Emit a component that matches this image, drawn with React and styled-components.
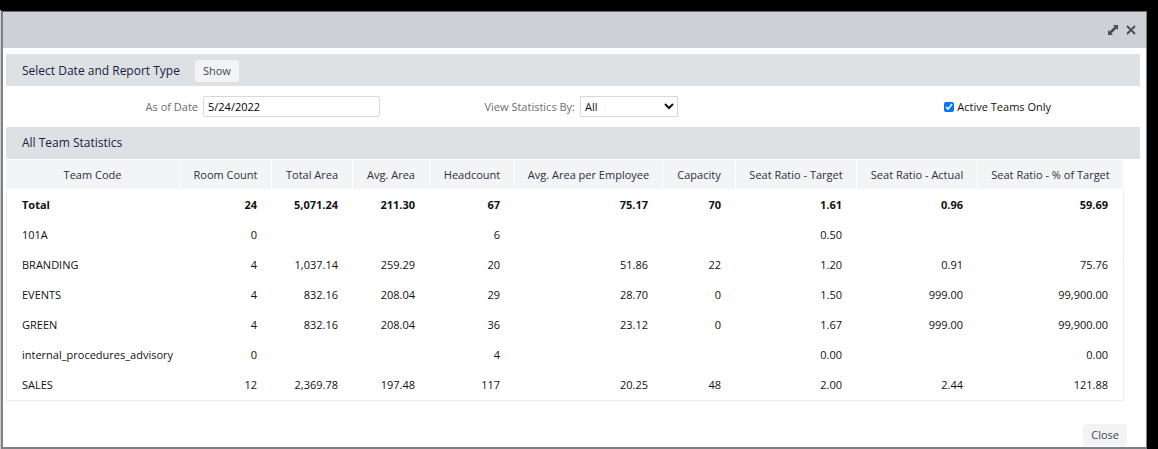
import React from "react";
import styled, { createGlobalStyle } from "styled-components";

const GlobalStyle = createGlobalStyle`
  *, *::before, *::after { box-sizing: border-box; }
  html, body, #root { height: 100%; }
  body {
    margin: 0;
    background: #000;
    font-family: "Open Sans", "Noto Sans", sans-serif;
    font-size: 11px;
    line-height: 16px;
    color: #111;
  }
  button, input, select { font: inherit; }
`;

const Backdrop = styled.div`
  min-height: 100%;
  display: flex;
  padding: 11px 11px 0 0;
  border-left: 1px solid #c9cdd1;
  border-image: linear-gradient(#000 11px, #c9cdd1 11px) 1;
`;

const Dialog = styled.section`
  flex: 1;
  min-width: 0;
  display: flex;
  flex-direction: column;
  background: #fff;
  border: 2px solid #7d8082;
  border-right-width: 1px;
  border-top: 1px solid #6b6e70;
`;

const TitleBar = styled.header`
  height: 36px;
  flex: none;
  display: flex;
  align-items: center;
  justify-content: flex-end;
  gap: 6px;
  padding-right: 9px;
  background: #cdd1d5;
`;

const IconButton = styled.button`
  display: flex;
  width: 12px;
  height: 12px;
  padding: 0;
  border: 0;
  background: none;
  color: #464c5b;
`;

const Body = styled.main`
  flex: 1;
  display: flex;
  flex-direction: column;
  padding: 6px 6px 0 3px;
`;

const SectionBar = styled.div`
  display: flex;
  align-items: center;
  gap: 15px;
  height: 32px;
  flex: none;
  padding: 0 16px;
  background: #dee1e4;
`;

const ControlBar = styled(SectionBar)`
  padding-top: 2px;
`;

const SectionTitle = styled.h2`
  margin: 0;
  font-size: 12px;
  font-weight: 500;
  color: #14213f;
`;

const Button = styled.button`
  height: 22px;
  padding: 0 8px;
  border: 0;
  border-radius: 3px;
  background: #f1f3f5;
  color: #3f4756;
`;

const Filters = styled.form`
  display: grid;
  grid-template-columns: 374fr 298fr 462fr;
  align-items: center;
  height: 41px;
  flex: none;
`;

const Field = styled.div`
  display: flex;
  align-items: center;
  justify-content: flex-end;
  gap: 5px;
`;

const CheckField = styled(Field)`
  gap: 3px;
  padding-right: 89px;
`;

const Label = styled.label`
  color: #6a6e74;
`;

const CheckLabel = styled.label`
  color: #111;
`;

const TextInput = styled.input`
  width: 177px;
  height: 21px;
  padding: 0 4px;
  border: 1px solid #d5d9dc;
  border-radius: 2px;
  color: #000;
  background: #fff;
`;

const Select = styled.select`
  width: 98px;
  height: 21px;
  padding: 0;
  border: 1px solid #d5d9dc;
  border-radius: 0;
  color: #111;
  background: #fff;
`;

const Checkbox = styled.input`
  width: 10px;
  height: 10px;
  margin: 0;
  accent-color: #0075ff;
`;

const TableWrap = styled.div`
  padding: 0 16px 0 0;
`;

const Table = styled.table`
  width: 100%;
  table-layout: fixed;
  border-collapse: separate;
  border-spacing: 0;
`;

const Col = styled.col`
  width: ${(p) => p.$w}px;
`;

const HeadCell = styled.th`
  height: 31px;
  padding: 0;
  border-top: 1px solid #fff;
  border-right: 1px solid #fff;
  border-bottom: 1px solid #fff;
  background: #f3f4f6;
  background-clip: padding-box;
  color: #2b303b;
  font-weight: 500;
  text-align: center;
  white-space: nowrap;
`;

const Row = styled.tr`
  font-weight: ${(p) => (p.$total ? 700 : 400)};

  td:first-child {
    padding-left: 15px;
    border-left: 1px solid #ededef;
    text-align: left;
  }
  td:last-child { border-right: 1px solid #ededef; }
  &:last-child td {
    height: 31px;
    border-bottom: 1px solid #ededef;
  }
`;

const Cell = styled.td`
  height: 30px;
  padding: 0 15px 0 0;
  text-align: right;
  white-space: nowrap;
`;

const Footer = styled.footer`
  display: flex;
  justify-content: flex-end;
  margin-top: auto;
  padding: 0 13px 1px 0;
`;

const columns = [
  ["Team Code", 174],
  ["Room Count", 92],
  ["Total Area", 81],
  ["Avg. Area", 77],
  ["Headcount", 85],
  ["Avg. Area per Employee", 148],
  ["Capacity", 73],
  ["Seat Ratio - Target", 121],
  ["Seat Ratio - Actual", 121],
  ["Seat Ratio - % of Target", 146],
];

const rows = [
  ["Total", "24", "5,071.24", "211.30", "67", "75.17", "70", "1.61", "0.96", "59.69"],
  ["101A", "0", "", "", "6", "", "", "0.50", "", ""],
  ["BRANDING", "4", "1,037.14", "259.29", "20", "51.86", "22", "1.20", "0.91", "75.76"],
  ["EVENTS", "4", "832.16", "208.04", "29", "28.70", "0", "1.50", "999.00", "99,900.00"],
  ["GREEN", "4", "832.16", "208.04", "36", "23.12", "0", "1.67", "999.00", "99,900.00"],
  ["internal_procedures_advisory", "0", "", "", "4", "", "", "0.00", "", "0.00"],
  ["SALES", "12", "2,369.78", "197.48", "117", "20.25", "48", "2.00", "2.44", "121.88"],
];

const ExpandIcon = () => (
  <svg width="12" height="12" viewBox="0 0 12 12" fill="currentColor" aria-hidden="true">
    <path d="M6 1H11v5L9.4 4.4 4.4 9.4 6 11H1V6l1.6 1.6 5-5z" />
  </svg>
);

const CloseIcon = () => (
  <svg width="12" height="12" viewBox="0 0 12 12" fill="none" stroke="currentColor" strokeWidth="1.8" aria-hidden="true">
    <path d="M2 2l8 8M10 2l-8 8" />
  </svg>
);

export default function App() {
  return (
    <>
      <GlobalStyle />
      <Backdrop>
        <Dialog role="dialog" aria-label="Team Statistics">
          <TitleBar>
            <IconButton type="button" aria-label="Expand"><ExpandIcon /></IconButton>
            <IconButton type="button" aria-label="Close dialog"><CloseIcon /></IconButton>
          </TitleBar>
          <Body>
            <ControlBar>
              <SectionTitle>Select Date and Report Type</SectionTitle>
              <Button type="button">Show</Button>
            </ControlBar>
            <Filters>
              <Field>
                <Label htmlFor="asOf">As of Date</Label>
                <TextInput id="asOf" type="text" defaultValue="5/24/2022" />
              </Field>
              <Field>
                <Label htmlFor="viewBy">View Statistics By:</Label>
                <Select id="viewBy" defaultValue="All">
                  <option>All</option>
                </Select>
              </Field>
              <CheckField>
                <Checkbox id="active" type="checkbox" defaultChecked />
                <CheckLabel htmlFor="active">Active Teams Only</CheckLabel>
              </CheckField>
            </Filters>
            <SectionBar>
              <SectionTitle>All Team Statistics</SectionTitle>
            </SectionBar>
            <TableWrap>
              <Table>
                <colgroup>
                  {columns.map(([name, w]) => <Col key={name} $w={w} />)}
                </colgroup>
                <thead>
                  <tr>
                    {columns.map(([name]) => <HeadCell key={name} scope="col">{name}</HeadCell>)}
                  </tr>
                </thead>
                <tbody>
                  {rows.map((r, i) => (
                    <Row key={r[0]} $total={i === 0}>
                      {r.map((value, j) => <Cell key={j}>{value}</Cell>)}
                    </Row>
                  ))}
                </tbody>
              </Table>
            </TableWrap>
            <Footer>
              <Button type="button">Close</Button>
            </Footer>
          </Body>
        </Dialog>
      </Backdrop>
    </>
  );
}
